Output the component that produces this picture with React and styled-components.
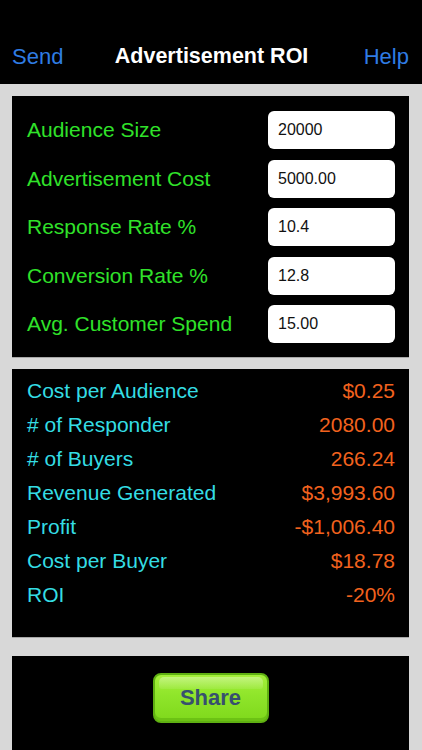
import React from "react";
import styled, { createGlobalStyle } from "styled-components";

const GlobalStyle = createGlobalStyle`
	html, body {
		margin: 0;
		padding: 0;
		background: #d8d8d8;
		font-family: "Liberation Sans", Arial, sans-serif;
	}
`;

const Screen = styled.div`
	width: 422px;
	height: 750px;
	overflow: hidden;
	background: #d8d8d8;
	display: flex;
	flex-direction: column;
`;

const Header = styled.header`
	height: 84px;
	flex-shrink: 0;
	background: #000;
	display: flex;
	align-items: center;
	justify-content: space-between;
	padding: 30px 13px 0 12px;
	box-sizing: border-box;
`;

const NavButton = styled.span`
	color: #2f7ce4;
	font-size: 22px;
	line-height: 1;
`;

const Title = styled.h1`
	margin: 0 4px 0 0;
	color: #fff;
	font-size: 21.5px;
	font-weight: 700;
	line-height: 1;
`;

const Body = styled.div`
	flex: 1;
	display: flex;
	flex-direction: column;
	padding: 12px 13px 0 12px;
`;

const Panel = styled.section`
	background: #000;
	border-bottom: 1px solid #a8a8a8;
	margin-bottom: ${(p) => p.$gap || 0}px;
	box-sizing: border-box;
`;

const InputPanel = styled(Panel)`
	display: grid;
	row-gap: 10.5px;
	padding: 15px 14px 14px 15px;
`;

const InputRow = styled.div`
	display: flex;
	align-items: center;
	justify-content: space-between;
`;

const InputLabel = styled.label`
	color: #30e22a;
	font-size: 21px;
`;

const Field = styled.div`
	width: 127px;
	height: 38px;
	background: #fff;
	border-radius: 6px;
	display: flex;
	align-items: center;
	padding-left: 10px;
	box-sizing: border-box;
	color: #111;
	font-size: 16px;
`;

const ResultPanel = styled(Panel)`
	height: 269px;
	padding: 5px 14px 0 15px;
`;

const ResultRow = styled.div`
	height: 34px;
	display: flex;
	align-items: center;
	justify-content: space-between;
	font-size: 21px;
`;

const ResultLabel = styled.span`
	color: #34dde4;
`;

const ResultValue = styled.span`
	color: #f2621e;
`;

const SharePanel = styled(Panel)`
	flex: 1;
	display: flex;
	justify-content: center;
	align-items: flex-start;
	padding-top: 17px;
	border-bottom: none;
`;

const ShareButton = styled.button`
	position: relative;
	width: 116px;
	height: 50px;
	border-radius: 8px;
	border: 2px solid #5fb012;
	background: linear-gradient(#a4ef3a 0%, #8fe52a 45%, #7fd81c 100%);
	box-shadow: inset 0 -3px 0 #6cc214;
	color: #37506f;
	font-family: "Liberation Sans", Arial, sans-serif;
	font-size: 22px;
	font-weight: 700;
	padding: 0;
	overflow: hidden;
	&::before {
		content: "";
		position: absolute;
		left: 4px;
		right: 4px;
		top: 2px;
		height: 12px;
		border-radius: 5px 5px 3px 3px;
		background: linear-gradient(rgba(255, 255, 255, 0.35), rgba(255, 255, 255, 0.08));
	}
	span {
		position: relative;
	}
`;

const inputs = [
	["Audience Size", "20000"],
	["Advertisement Cost", "5000.00"],
	["Response Rate %", "10.4"],
	["Conversion Rate %", "12.8"],
	["Avg. Customer Spend", "15.00"],
];

const results = [
	["Cost per Audience", "$0.25"],
	["# of Responder", "2080.00"],
	["# of Buyers", "266.24"],
	["Revenue Generated", "$3,993.60"],
	["Profit", "-$1,006.40"],
	["Cost per Buyer", "$18.78"],
	["ROI", "-20%"],
];

export default function App() {
	return (
		<Screen>
			<GlobalStyle />
			<Header>
				<NavButton>Send</NavButton>
				<Title>Advertisement ROI</Title>
				<NavButton>Help</NavButton>
			</Header>
			<Body>
				<InputPanel $gap={11}>
					{inputs.map(([label, value]) => (
						<InputRow key={label}>
							<InputLabel>{label}</InputLabel>
							<Field>{value}</Field>
						</InputRow>
					))}
				</InputPanel>
				<ResultPanel $gap={18}>
					{results.map(([label, value]) => (
						<ResultRow key={label}>
							<ResultLabel>{label}</ResultLabel>
							<ResultValue>{value}</ResultValue>
						</ResultRow>
					))}
				</ResultPanel>
				<SharePanel>
					<ShareButton>
						<span>Share</span>
					</ShareButton>
				</SharePanel>
			</Body>
		</Screen>
	);
}
